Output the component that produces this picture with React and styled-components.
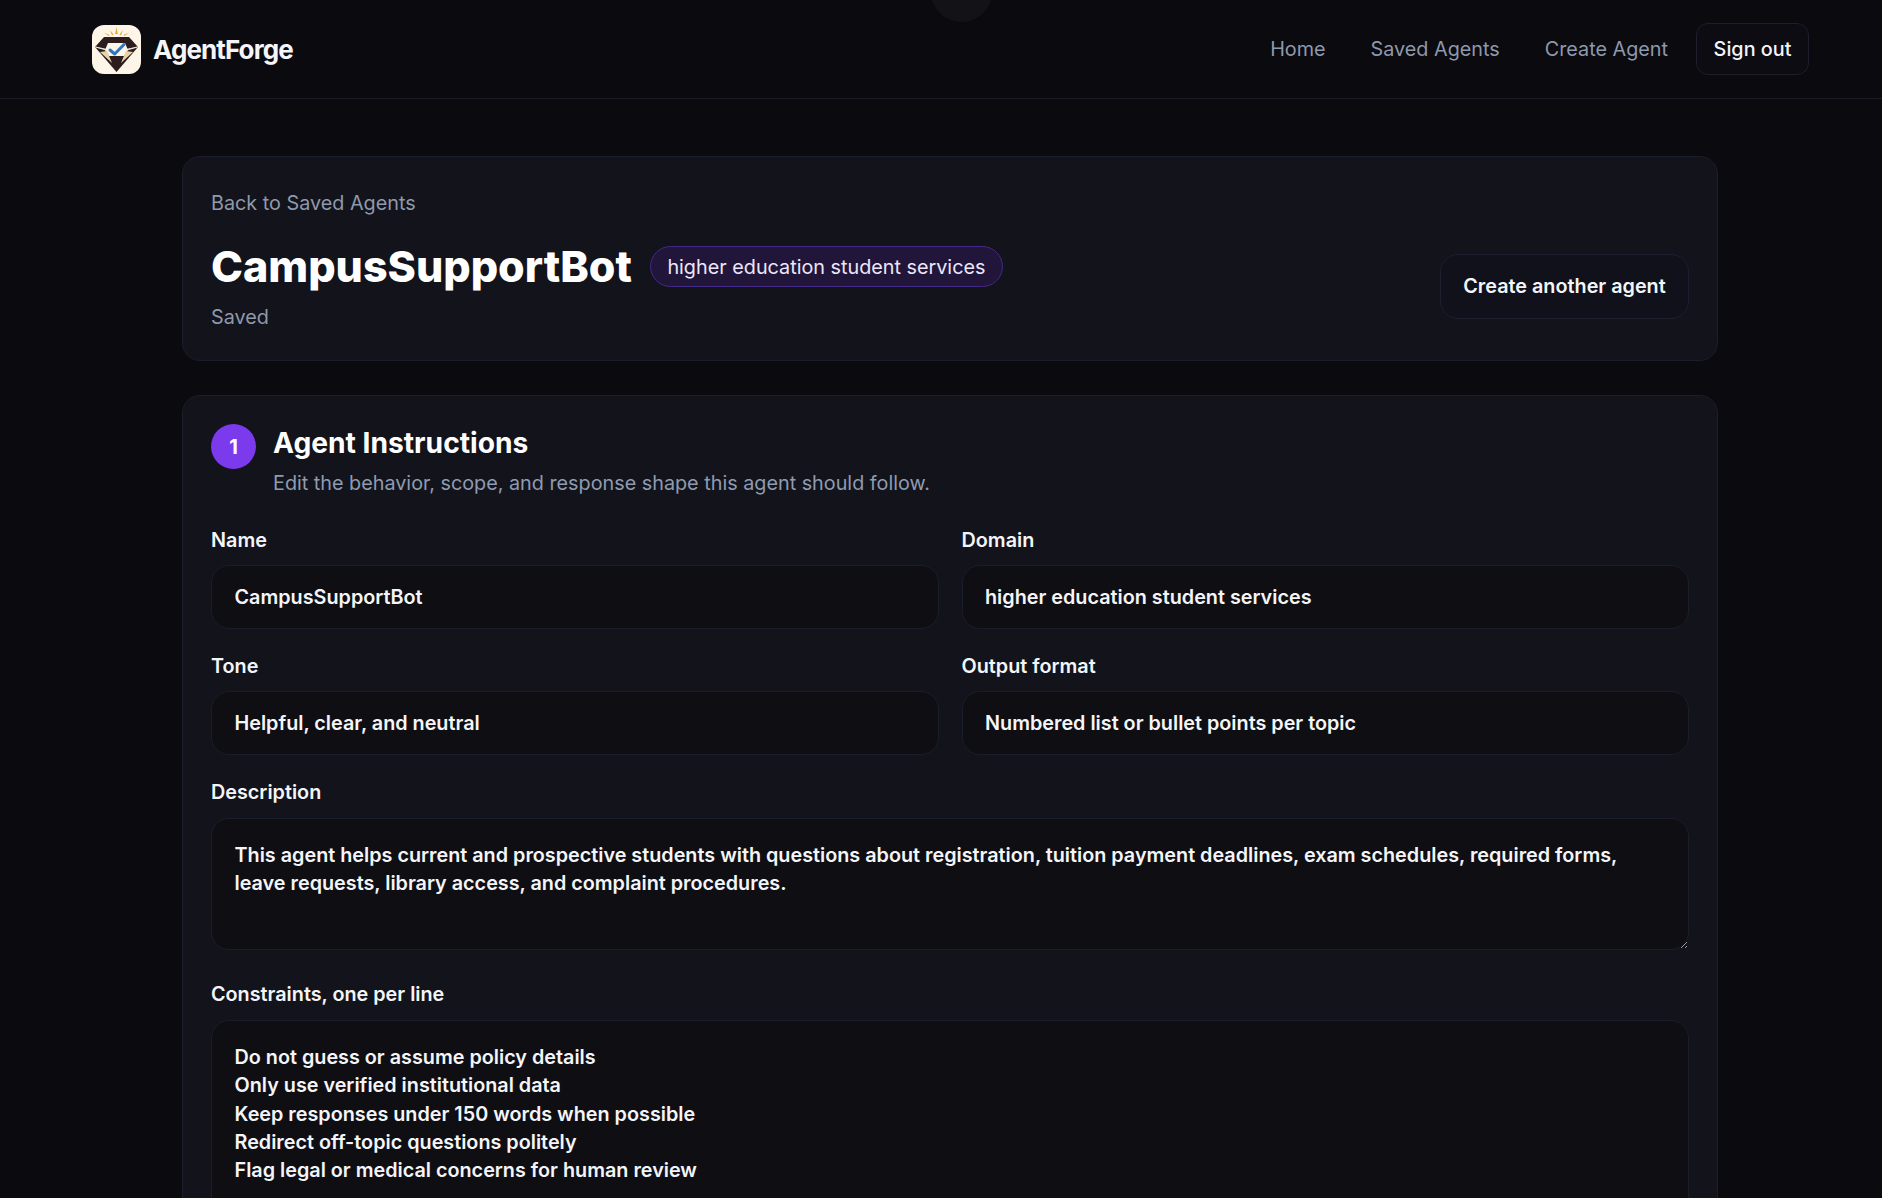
import React from "react";
import styled, { createGlobalStyle } from "styled-components";

const Global = createGlobalStyle`
  * { box-sizing: border-box; }
  html, body { margin: 0; padding: 0; background: #0a0a0f; }
  body { font-family: Inter, "Liberation Sans", sans-serif; color: #f4f5f8; }
  #root { height: 100vh; overflow: hidden; }
`;

const Page = styled.div`
  position: relative;
  height: 100%;
  overflow: hidden;
  background: #0a0a0f;
`;
const Ghost = styled.div`
  position: absolute;
  left: 931px;
  top: -39px;
  width: 61px;
  height: 61px;
  border-radius: 50%;
  background: #121217;
`;
const Nav = styled.header`
  height: 99px;
  display: flex;
  align-items: center;
  justify-content: space-between;
  padding: 0 73px 0 92px;
  border-bottom: 1px solid #1b1b28;
`;
const Brand = styled.a`
  display: flex;
  align-items: center;
  gap: 12px;
  font-size: 26px;
  font-weight: 700;
  letter-spacing: -0.9px;
  color: #f4f5f8;
`;
const Links = styled.nav`
  display: flex;
  align-items: center;
  gap: 45px;
`;
const NavLink = styled.a`
  font-size: 19.8px;
  color: #8f99ac;
`;
const SignOut = styled.button`
  width: 113px;
  height: 52px;
  margin-left: -17px;
  border: 1px solid #1e1e2d;
  border-radius: 12px;
  background: #0c0c12;
  color: #f4f5f8;
  font: 500 19.8px Inter, sans-serif;
`;
const Main = styled.main`
  width: 1536px;
  margin: 57px 0 0 182px;
  display: flex;
  flex-direction: column;
  gap: 34px;
`;
const Card = styled.section`
  background: #12131b;
  border: 1px solid #1c1d2b;
  border-radius: 18px;
  padding: 28px;
`;
const HeaderCard = styled(Card)`
  height: 205px;
  padding-top: 34px;
  display: flex;
  justify-content: space-between;
`;
const Back = styled.a`
  display: block;
  font-size: 19.8px;
  line-height: 24px;
  color: #8f99ac;
`;
const TitleRow = styled.div`
  display: flex;
  align-items: center;
  gap: 18px;
  margin-top: 26px;
`;
const Title = styled.h1`
  margin: 0;
  font-size: 43px;
  line-height: 50px;
  font-weight: 800;
  color: #fff;
`;
const Pill = styled.span`
  height: 41px;
  display: flex;
  align-items: center;
  padding: 1px 16.5px 0;
  border: 1px solid #43298a;
  border-radius: 21px;
  background: #21163a;
  color: #ece7fa;
  font-size: 19.8px;
`;
const Saved = styled.div`
  margin-top: 14px;
  font-size: 19.8px;
  line-height: 24px;
  color: #8f99ac;
`;
const AnotherButton = styled.button`
  align-self: flex-end;
  width: 249px;
  height: 65px;
  margin-bottom: 13px;
  padding: 0 0 2px;
  border: 1px solid #1e1f2e;
  border-radius: 18px;
  background: #10111a;
  color: #f4f5f8;
  font: 600 19.8px Inter, sans-serif;
`;
const SectionHead = styled.div`
  display: flex;
  gap: 17px;
`;
const Num = styled.div`
  width: 45px;
  height: 45px;
  border-radius: 50%;
  background: #7c3aed;
  display: flex;
  align-items: center;
  justify-content: center;
  font-size: 20px;
  font-weight: 700;
  color: #fff;
`;
const SectionTitle = styled.h2`
  margin: 1px 0 0;
  font-size: 28.2px;
  line-height: 36px;
  font-weight: 700;
  color: #fff;
`;
const SectionSub = styled.p`
  margin: 9px 0 0;
  font-size: 19.8px;
  line-height: 26px;
  color: #8f9bb0;
`;
const Grid = styled.div`
  display: grid;
  grid-template-columns: 1fr 1fr;
  column-gap: 23px;
  row-gap: 25px;
  margin-top: 32px;
`;
const Field = styled.label`
  display: flex;
  flex-direction: column;
  grid-column: ${(p) => (p.$wide ? "1 / -1" : "auto")};
`;
const Label = styled.span`
  font-size: 19.8px;
  line-height: 24px;
  font-weight: 600;
  color: #f4f5f8;
  margin-bottom: 13px;
`;
const Input = styled.input`
  height: 64px;
  padding: 0 22.5px;
  background: #0e0e13;
  border: 1px solid #1c1d2b;
  border-radius: 18px;
  color: #f4f5f8;
  font: 600 19.8px Inter, sans-serif;
  outline: none;
`;
const Area = styled.textarea`
  height: ${(p) => p.$h}px;
  margin: 1px 0 7px;
  padding: 22px 22.5px;
  background: #0e0e13;
  border: 1px solid #1c1d2b;
  border-radius: 18px;
  color: #f4f5f8;
  font: 600 19.8px/28.3px Inter, sans-serif;
  outline: none;
  resize: vertical;
`;

const Logo = () => (
  <svg width="49" height="49" viewBox="0 0 49 49" aria-hidden="true">
    <rect width="49" height="49" rx="12" fill="#fdf5e7" />
    <path d="M24.5 2l1.3 7h-2.6zM18 5l3.5 4.5-1.5.8zM31 5l-3.5 4.5 1.5.8zM12 7.5l5.5 2.5-.8 1zM37 7.5l-5.5 2.5.8 1z" fill="#e3a42c" />
    <path d="M12 12h25l9 10-21.5 25L3 22z" fill="#2c1c1e" />
    <path d="M3.5 22l12 2.5v1L3.5 22zM45.5 22l-12 2.5v1L45.5 22z" fill="#f2ece0" stroke="#f2ece0" strokeWidth="0.8" />
    <path d="M16 18h17l3 7-4 6H17l-4-6z" fill="#fdf5e7" />
    <path d="M8 27l7-1 5 12zM41 27l-7-1-5 12z" fill="#e8d2a8" />
    <path d="M18 25l4.7 4L32 19.5" fill="none" stroke="#2f76bd" strokeWidth="3" strokeLinecap="round" strokeLinejoin="round" />
  </svg>
);

export default function App() {
  return (
    <Page>
      <Global />
      <Ghost />
      <Nav>
        <Brand>
          <Logo />
          AgentForge
        </Brand>
        <Links>
          <NavLink>Home</NavLink>
          <NavLink>Saved Agents</NavLink>
          <NavLink>Create Agent</NavLink>
          <SignOut>Sign out</SignOut>
        </Links>
      </Nav>
      <Main>
        <HeaderCard>
          <div>
            <Back>Back to Saved Agents</Back>
            <TitleRow>
              <Title>CampusSupportBot</Title>
              <Pill>higher education student services</Pill>
            </TitleRow>
            <Saved>Saved</Saved>
          </div>
          <AnotherButton>Create another agent</AnotherButton>
        </HeaderCard>
        <Card>
          <SectionHead>
            <Num>1</Num>
            <div>
              <SectionTitle>Agent Instructions</SectionTitle>
              <SectionSub>Edit the behavior, scope, and response shape this agent should follow.</SectionSub>
            </div>
          </SectionHead>
          <Grid>
            <Field>
              <Label>Name</Label>
              <Input defaultValue="CampusSupportBot" />
            </Field>
            <Field>
              <Label>Domain</Label>
              <Input defaultValue="higher education student services" />
            </Field>
            <Field>
              <Label>Tone</Label>
              <Input defaultValue="Helpful, clear, and neutral" />
            </Field>
            <Field>
              <Label>Output format</Label>
              <Input defaultValue="Numbered list or bullet points per topic" />
            </Field>
            <Field $wide>
              <Label>Description</Label>
              <Area
                $h={132}
                defaultValue="This agent helps current and prospective students with questions about registration, tuition payment deadlines, exam schedules, required forms, leave requests, library access, and complaint procedures."
              />
            </Field>
            <Field $wide>
              <Label>Constraints, one per line</Label>
              <Area
                $h={240}
                defaultValue={"Do not guess or assume policy details\nOnly use verified institutional data\nKeep responses under 150 words when possible\nRedirect off-topic questions politely\nFlag legal or medical concerns for human review"}
              />
            </Field>
          </Grid>
        </Card>
      </Main>
    </Page>
  );
}
